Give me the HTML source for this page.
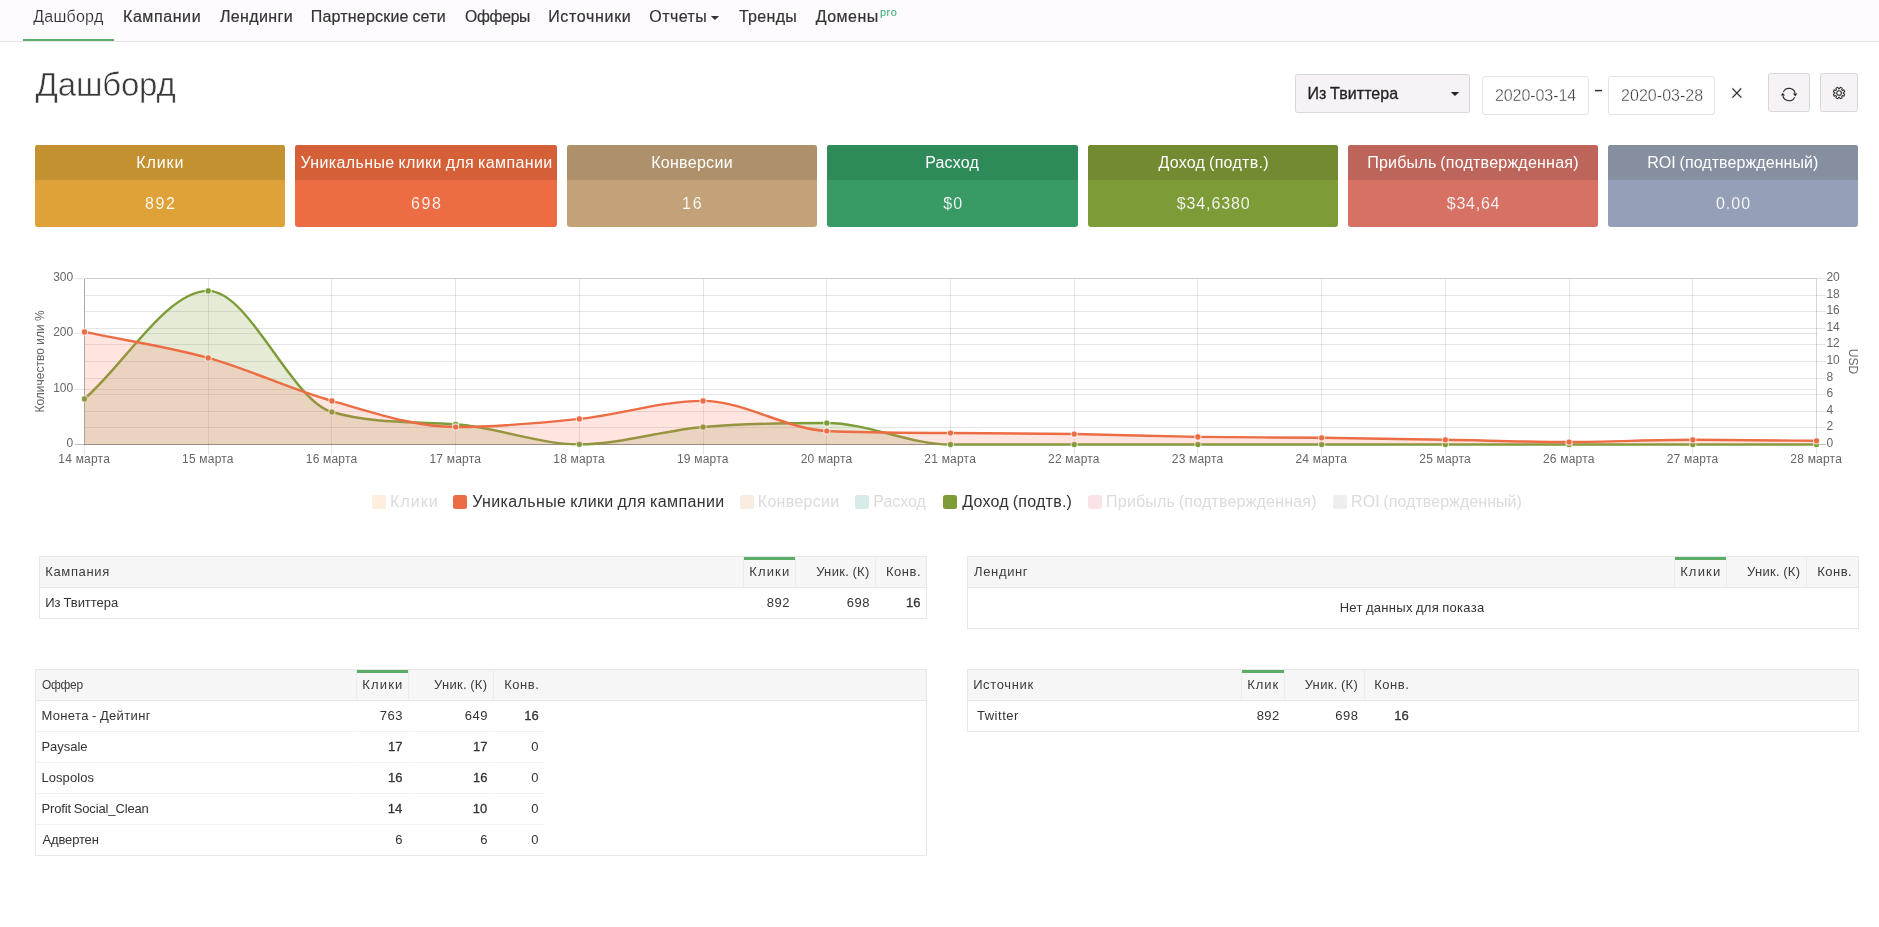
<!DOCTYPE html>
<html lang="ru"><head><meta charset="utf-8"><title>Дашборд</title>
<style>
html,body{margin:0;padding:0;background:#fff;}
body{width:1879px;height:927px;position:relative;overflow:hidden;font-family:"Liberation Sans",sans-serif;color:#333;}
#page{position:absolute;left:0;top:0;width:1879px;height:927px;overflow:hidden;background:#fff;will-change:transform;transform:translateZ(0);}
.b{position:absolute;display:block;}
.t{position:absolute;display:block;line-height:1;white-space:nowrap;margin:0;padding:0;font-weight:normal;text-decoration:none;}
.nav{position:absolute;left:0;top:0;width:1879px;height:41px;background:#fefbfe;border-bottom:1px solid #e6e6e6;}
.thin{-webkit-text-stroke:.5px #fff;}
.navact{-webkit-text-stroke:.15px #fefbfe;color:#2e2e2e !important;}
.navi{-webkit-text-stroke:.2px #333;}
.thin2{-webkit-text-stroke:.35px #fff;}
.thinw{}
.med{-webkit-text-stroke:.3px #222;text-shadow:0 0 1.5px #fff;}
.ico{filter:drop-shadow(0 0 .8px #fff);}
.sb{-webkit-text-stroke:.3px #333;}
svg line{stroke-width:1;shape-rendering:crispEdges;}
</style></head>
<body>
<div id="page">
<div class="nav"></div>
<div class="b " style="left:23px;top:39px;width:91px;height:2px;background:#5bac67;"></div>
<a class="t navact" style="left:33.18px;top:9px;font-size:16px;letter-spacing:0.263px;color:#333;">Дашборд</a>
<a class="t navi" style="left:122.98px;top:9px;font-size:16px;letter-spacing:0.589px;color:#333;">Кампании</a>
<a class="t navi" style="left:219.88px;top:9px;font-size:16px;letter-spacing:0.397px;color:#333;">Лендинги</a>
<a class="t navi" style="left:310.72px;top:9px;font-size:16px;letter-spacing:0.196px;word-spacing:-0.88px;color:#333;">Партнерские сети</a>
<a class="t navi" style="left:464.74px;top:9px;font-size:16px;letter-spacing:-0.300px;color:#333;transform:scaleX(0.9815);transform-origin:0.76px 50%;">Офферы</a>
<a class="t navi" style="left:548.18px;top:9px;font-size:16px;letter-spacing:0.670px;color:#333;">Источники</a>
<a class="t navi" style="left:649.24px;top:9px;font-size:16px;letter-spacing:0.452px;color:#333;">Отчеты</a>
<a class="t navi" style="left:738.94px;top:9px;font-size:16px;letter-spacing:0.304px;color:#333;">Тренды</a>
<a class="t navi" style="left:815.68px;top:9px;font-size:16px;letter-spacing:0.496px;color:#333;">Домены</a>
<svg class="b" style="left:710px;top:15px" width="11" height="7" viewBox="710 15 11 7"><path d="M710.8,16H719.1L714.95,20.1Z" fill="#333"/></svg>
<span class="t " style="left:879.88px;top:7px;font-size:11px;letter-spacing:0.580px;color:#34a86e;">pro</span>
<h1 class="t thin" style="left:35.55px;top:68px;font-size:33px;letter-spacing:-0.183px;color:#3a3a3a;">Дашборд</h1>
<div class="b " style="left:1295px;top:74px;width:175px;height:39px;background:#f6f2f6;border:1px solid #d9d6d9;border-radius:2.5px;box-sizing:border-box;"></div>
<span class="t med" style="left:1307.48px;top:86px;font-size:16px;letter-spacing:0.060px;word-spacing:-0.88px;color:#222;">Из Твиттера</span>
<svg class="b" style="left:1450px;top:91px" width="11" height="7" viewBox="1450 91 11 7"><path d="M1450.8,92H1459.2L1455,96.1Z" fill="#222"/></svg>
<div class="b " style="left:1482px;top:76px;width:107px;height:39px;background:#fff;border:1px solid #e4e3e4;border-radius:3px;box-sizing:border-box;"></div>
<span class="t thin2" style="left:1494.90px;top:88px;font-size:16px;letter-spacing:-0.056px;color:#3d3d3d;">2020-03-14</span>
<span class="t " style="left:1594.57px;top:83px;font-size:14.4px;color:#2f302d;font-weight:bold;transform:translateY(.45px);">–</span>
<div class="b " style="left:1608px;top:76px;width:107px;height:39px;background:#fff;border:1px solid #e4e3e4;border-radius:3px;box-sizing:border-box;"></div>
<span class="t thin2" style="left:1621.10px;top:88px;font-size:16px;letter-spacing:0.027px;color:#3d3d3d;">2020-03-28</span>
<span class="t thin2" style="left:1730.06px;top:82px;font-size:23.4px;color:#2f302d;">×</span>
<div class="b " style="left:1768px;top:73px;width:42px;height:39px;background:#f6f2f6;border:1px solid #d9d6d9;border-radius:2.5px;box-sizing:border-box;"></div>
<div class="b " style="left:1820px;top:73px;width:38px;height:39px;background:#f6f2f6;border:1px solid #d9d6d9;border-radius:2.5px;box-sizing:border-box;"></div>
<svg class="b ico" style="left:1777px;top:83px" width="24" height="24" viewBox="1777 83 24 24"><g fill="none" stroke="#2f302d" stroke-width="1.15"><path d="M1783.38,91.93A6.20,6.20 0 0 1 1795.14,93.69"/><path d="M1794.62,97.17A6.20,6.20 0 0 1 1782.86,95.41"/></g><path d="M1792.9,93.5H1797.3L1795.3,96.4Z" fill="#2f302d"/><path d="M1780.7,95.6H1785.1L1782.7,92.7Z" fill="#2f302d"/></svg>
<svg class="b ico" style="left:1827px;top:81px" width="24" height="24" viewBox="1827 81 24 24" fill="none" stroke="#2f302d" stroke-width="1.05"><path d="M1844.78,94.17L1843.93,96.23L1842.36,95.59L1841.64,96.31L1842.28,97.88L1840.22,98.73L1839.56,97.17L1838.54,97.17L1837.88,98.73L1835.82,97.88L1836.46,96.31L1835.74,95.59L1834.17,96.23L1833.32,94.17L1834.88,93.51L1834.88,92.49L1833.32,91.83L1834.17,89.77L1835.74,90.41L1836.46,89.69L1835.82,88.12L1837.88,87.27L1838.54,88.83L1839.56,88.83L1840.22,87.27L1842.28,88.12L1841.64,89.69L1842.36,90.41L1843.93,89.77L1844.78,91.83L1843.22,92.49L1843.22,93.51Z" stroke-linejoin="round"/><circle cx="1839.05" cy="93.00" r="2.3"/></svg>
<div class="b " style="left:35px;top:145px;width:250px;height:82px;background:#dfa239;border-radius:3px;overflow:hidden;"><div style="height:35px;background:#c49130"></div></div>
<div class="b " style="left:295px;top:145px;width:262px;height:82px;background:#ec6c44;border-radius:3px;overflow:hidden;"><div style="height:35px;background:#d56038"></div></div>
<div class="b " style="left:567px;top:145px;width:250px;height:82px;background:#c4a279;border-radius:3px;overflow:hidden;"><div style="height:35px;background:#ae916a"></div></div>
<div class="b " style="left:827px;top:145px;width:251px;height:82px;background:#389b65;border-radius:3px;overflow:hidden;"><div style="height:35px;background:#2f8a5a"></div></div>
<div class="b " style="left:1088px;top:145px;width:250px;height:82px;background:#7d9c38;border-radius:3px;overflow:hidden;"><div style="height:35px;background:#728a30"></div></div>
<div class="b " style="left:1348px;top:145px;width:250px;height:82px;background:#d67164;border-radius:3px;overflow:hidden;"><div style="height:35px;background:#bd655a"></div></div>
<div class="b " style="left:1608px;top:145px;width:250px;height:82px;background:#959fb8;border-radius:3px;overflow:hidden;"><div style="height:35px;background:#868fa0"></div></div>
<span class="t " style="left:136.28px;top:155px;font-size:16px;letter-spacing:0.920px;color:#fff;">Клики</span>
<span class="t " style="left:145.07px;top:196px;font-size:16px;letter-spacing:1.630px;color:#fff;-webkit-text-stroke:.15px #dfa239;">892</span>
<span class="t " style="left:300.41px;top:155px;font-size:16px;letter-spacing:0.375px;word-spacing:-0.88px;color:#fff;">Уникальные клики для кампании</span>
<span class="t " style="left:410.95px;top:196px;font-size:16px;letter-spacing:1.650px;color:#fff;-webkit-text-stroke:.15px #ec6c44;">698</span>
<span class="t " style="left:651.18px;top:155px;font-size:16px;letter-spacing:0.295px;color:#fff;">Конверсии</span>
<span class="t " style="left:681.90px;top:196px;font-size:16px;letter-spacing:1.920px;color:#fff;-webkit-text-stroke:.15px #c4a279;">16</span>
<span class="t " style="left:925.18px;top:155px;font-size:16px;letter-spacing:0.168px;color:#fff;">Расход</span>
<span class="t " style="left:943.34px;top:196px;font-size:16px;letter-spacing:1.000px;color:#fff;-webkit-text-stroke:.15px #389b65;">$0</span>
<span class="t " style="left:1158.38px;top:155px;font-size:16px;letter-spacing:0.277px;word-spacing:-0.88px;color:#fff;">Доход (подтв.)</span>
<span class="t " style="left:1176.84px;top:196px;font-size:16px;letter-spacing:0.863px;color:#fff;-webkit-text-stroke:.15px #7d9c38;">$34,6380</span>
<span class="t " style="left:1367.22px;top:155px;font-size:16px;letter-spacing:0.226px;word-spacing:-0.88px;color:#fff;">Прибыль (подтвержденная)</span>
<span class="t " style="left:1446.84px;top:196px;font-size:16px;letter-spacing:0.736px;color:#fff;-webkit-text-stroke:.15px #d67164;">$34,64</span>
<span class="t " style="left:1647.18px;top:155px;font-size:16px;letter-spacing:0.082px;word-spacing:-0.88px;color:#fff;">ROI (подтвержденный)</span>
<span class="t " style="left:1715.90px;top:196px;font-size:16px;letter-spacing:1.027px;color:#fff;-webkit-text-stroke:.15px #959fb8;">0.00</span>
<svg class="b" style="left:0;top:250px" width="1879" height="240" viewBox="0 250 1879 240">
<line x1="84.5" y1="427.5" x2="1825.5" y2="427.5" stroke="#000" stroke-opacity=".1"/>
<line x1="84.5" y1="411.5" x2="1825.5" y2="411.5" stroke="#000" stroke-opacity=".1"/>
<line x1="84.5" y1="394.5" x2="1825.5" y2="394.5" stroke="#000" stroke-opacity=".1"/>
<line x1="84.5" y1="378.5" x2="1825.5" y2="378.5" stroke="#000" stroke-opacity=".1"/>
<line x1="84.5" y1="361.5" x2="1825.5" y2="361.5" stroke="#000" stroke-opacity=".1"/>
<line x1="84.5" y1="344.5" x2="1825.5" y2="344.5" stroke="#000" stroke-opacity=".1"/>
<line x1="84.5" y1="328.5" x2="1825.5" y2="328.5" stroke="#000" stroke-opacity=".1"/>
<line x1="84.5" y1="311.5" x2="1825.5" y2="311.5" stroke="#000" stroke-opacity=".1"/>
<line x1="84.5" y1="295.5" x2="1825.5" y2="295.5" stroke="#000" stroke-opacity=".1"/>
<line x1="84.5" y1="278.5" x2="1825.5" y2="278.5" stroke="#000" stroke-opacity=".1"/>
<line x1="74.5" y1="389.5" x2="1816.5" y2="389.5" stroke="#000" stroke-opacity=".1"/>
<line x1="74.5" y1="333.5" x2="1816.5" y2="333.5" stroke="#000" stroke-opacity=".1"/>
<line x1="74.5" y1="278.5" x2="1816.5" y2="278.5" stroke="#000" stroke-opacity=".1"/>
<line x1="84.5" y1="278.5" x2="84.5" y2="454.5" stroke="#000" stroke-opacity=".1"/>
<line x1="208.5" y1="278.5" x2="208.5" y2="454.5" stroke="#000" stroke-opacity=".1"/>
<line x1="331.5" y1="278.5" x2="331.5" y2="454.5" stroke="#000" stroke-opacity=".1"/>
<line x1="455.5" y1="278.5" x2="455.5" y2="454.5" stroke="#000" stroke-opacity=".1"/>
<line x1="579.5" y1="278.5" x2="579.5" y2="454.5" stroke="#000" stroke-opacity=".1"/>
<line x1="703.5" y1="278.5" x2="703.5" y2="454.5" stroke="#000" stroke-opacity=".1"/>
<line x1="826.5" y1="278.5" x2="826.5" y2="454.5" stroke="#000" stroke-opacity=".1"/>
<line x1="950.5" y1="278.5" x2="950.5" y2="454.5" stroke="#000" stroke-opacity=".1"/>
<line x1="1074.5" y1="278.5" x2="1074.5" y2="454.5" stroke="#000" stroke-opacity=".1"/>
<line x1="1197.5" y1="278.5" x2="1197.5" y2="454.5" stroke="#000" stroke-opacity=".1"/>
<line x1="1321.5" y1="278.5" x2="1321.5" y2="454.5" stroke="#000" stroke-opacity=".1"/>
<line x1="1445.5" y1="278.5" x2="1445.5" y2="454.5" stroke="#000" stroke-opacity=".1"/>
<line x1="1569.5" y1="278.5" x2="1569.5" y2="454.5" stroke="#000" stroke-opacity=".1"/>
<line x1="1692.5" y1="278.5" x2="1692.5" y2="454.5" stroke="#000" stroke-opacity=".1"/>
<line x1="1816.5" y1="278.5" x2="1816.5" y2="454.5" stroke="#000" stroke-opacity=".1"/>
<line x1="1816.5" y1="278.5" x2="1816.5" y2="444.5" stroke="#000" stroke-opacity=".06"/>
<line x1="84.5" y1="278.5" x2="84.5" y2="444.5" stroke="#000" stroke-opacity=".25"/>
<line x1="74.5" y1="444.5" x2="1816.5" y2="444.5" stroke="#000" stroke-opacity=".25"/>
<line x1="84.5" y1="444.5" x2="1825.5" y2="444.5" stroke="#000" stroke-opacity=".25"/>
<path d="M84.50,398.90 C125.74,362.90 166.98,290.90 208.21,290.90 C249.45,290.90 290.69,400.05 331.93,412.00 C373.17,423.95 414.40,421.41 455.64,424.30 C496.88,427.19 538.12,444.30 579.36,444.30 C620.60,444.30 661.83,430.55 703.07,427.00 C744.31,423.45 785.55,423.00 826.79,423.00 C868.02,423.00 909.26,444.50 950.50,444.50 C991.74,444.50 1032.98,444.50 1074.21,444.50 C1115.45,444.50 1156.69,444.50 1197.93,444.50 C1239.17,444.50 1280.40,444.50 1321.64,444.50 C1362.88,444.50 1404.12,444.50 1445.36,444.50 C1486.60,444.50 1527.83,444.50 1569.07,444.50 C1610.31,444.50 1651.55,444.50 1692.79,444.50 C1734.02,444.50 1775.26,444.50 1816.50,444.50 L1816.50,444.50 L84.50,444.50 Z" fill="#7d9c38" fill-opacity="0.2"/>
<path d="M84.50,398.90 C125.74,362.90 166.98,290.90 208.21,290.90 C249.45,290.90 290.69,400.05 331.93,412.00 C373.17,423.95 414.40,421.41 455.64,424.30 C496.88,427.19 538.12,444.30 579.36,444.30 C620.60,444.30 661.83,430.55 703.07,427.00 C744.31,423.45 785.55,423.00 826.79,423.00 C868.02,423.00 909.26,444.50 950.50,444.50 C991.74,444.50 1032.98,444.50 1074.21,444.50 C1115.45,444.50 1156.69,444.50 1197.93,444.50 C1239.17,444.50 1280.40,444.50 1321.64,444.50 C1362.88,444.50 1404.12,444.50 1445.36,444.50 C1486.60,444.50 1527.83,444.50 1569.07,444.50 C1610.31,444.50 1651.55,444.50 1692.79,444.50 C1734.02,444.50 1775.26,444.50 1816.50,444.50" fill="none" stroke="#7d9c38" stroke-width="2.4" stroke-linejoin="round"/>
<circle cx="84.50" cy="398.90" r="3.1" fill="#7d9c38" stroke="#fff" stroke-opacity=".7" stroke-width="1.1"/>
<circle cx="208.21" cy="290.90" r="3.1" fill="#7d9c38" stroke="#fff" stroke-opacity=".7" stroke-width="1.1"/>
<circle cx="331.93" cy="412.00" r="3.1" fill="#7d9c38" stroke="#fff" stroke-opacity=".7" stroke-width="1.1"/>
<circle cx="455.64" cy="424.30" r="3.1" fill="#7d9c38" stroke="#fff" stroke-opacity=".7" stroke-width="1.1"/>
<circle cx="579.36" cy="444.30" r="3.1" fill="#7d9c38" stroke="#fff" stroke-opacity=".7" stroke-width="1.1"/>
<circle cx="703.07" cy="427.00" r="3.1" fill="#7d9c38" stroke="#fff" stroke-opacity=".7" stroke-width="1.1"/>
<circle cx="826.79" cy="423.00" r="3.1" fill="#7d9c38" stroke="#fff" stroke-opacity=".7" stroke-width="1.1"/>
<circle cx="950.50" cy="444.50" r="3.1" fill="#7d9c38" stroke="#fff" stroke-opacity=".7" stroke-width="1.1"/>
<circle cx="1074.21" cy="444.50" r="3.1" fill="#7d9c38" stroke="#fff" stroke-opacity=".7" stroke-width="1.1"/>
<circle cx="1197.93" cy="444.50" r="3.1" fill="#7d9c38" stroke="#fff" stroke-opacity=".7" stroke-width="1.1"/>
<circle cx="1321.64" cy="444.50" r="3.1" fill="#7d9c38" stroke="#fff" stroke-opacity=".7" stroke-width="1.1"/>
<circle cx="1445.36" cy="444.50" r="3.1" fill="#7d9c38" stroke="#fff" stroke-opacity=".7" stroke-width="1.1"/>
<circle cx="1569.07" cy="444.50" r="3.1" fill="#7d9c38" stroke="#fff" stroke-opacity=".7" stroke-width="1.1"/>
<circle cx="1692.79" cy="444.50" r="3.1" fill="#7d9c38" stroke="#fff" stroke-opacity=".7" stroke-width="1.1"/>
<circle cx="1816.50" cy="444.50" r="3.1" fill="#7d9c38" stroke="#fff" stroke-opacity=".7" stroke-width="1.1"/>
<path d="M84.50,331.90 C125.74,340.57 166.98,346.40 208.21,357.90 C249.45,369.40 290.69,389.38 331.93,400.90 C373.17,412.42 414.40,427.00 455.64,427.00 C496.88,427.00 538.12,423.25 579.36,418.90 C620.60,414.55 661.83,400.90 703.07,400.90 C744.31,400.90 785.55,429.01 826.79,431.00 C868.02,432.99 909.26,432.81 950.50,433.00 C991.74,433.19 1032.98,433.35 1074.21,434.00 C1115.45,434.65 1156.69,436.27 1197.93,436.90 C1239.17,437.53 1280.40,437.32 1321.64,437.80 C1362.88,438.28 1404.12,439.10 1445.36,439.80 C1486.60,440.50 1527.83,442.00 1569.07,442.00 C1610.31,442.00 1651.55,439.80 1692.79,439.80 C1734.02,439.80 1775.26,440.47 1816.50,440.80 L1816.50,444.50 L84.50,444.50 Z" fill="#ff7864" fill-opacity="0.2"/>
<path d="M84.50,331.90 C125.74,340.57 166.98,346.40 208.21,357.90 C249.45,369.40 290.69,389.38 331.93,400.90 C373.17,412.42 414.40,427.00 455.64,427.00 C496.88,427.00 538.12,423.25 579.36,418.90 C620.60,414.55 661.83,400.90 703.07,400.90 C744.31,400.90 785.55,429.01 826.79,431.00 C868.02,432.99 909.26,432.81 950.50,433.00 C991.74,433.19 1032.98,433.35 1074.21,434.00 C1115.45,434.65 1156.69,436.27 1197.93,436.90 C1239.17,437.53 1280.40,437.32 1321.64,437.80 C1362.88,438.28 1404.12,439.10 1445.36,439.80 C1486.60,440.50 1527.83,442.00 1569.07,442.00 C1610.31,442.00 1651.55,439.80 1692.79,439.80 C1734.02,439.80 1775.26,440.47 1816.50,440.80" fill="none" stroke="#ec6c44" stroke-width="2.4" stroke-linejoin="round"/>
<circle cx="84.50" cy="331.90" r="3.1" fill="#ec6c44" stroke="#fff" stroke-opacity=".7" stroke-width="1.1"/>
<circle cx="208.21" cy="357.90" r="3.1" fill="#ec6c44" stroke="#fff" stroke-opacity=".7" stroke-width="1.1"/>
<circle cx="331.93" cy="400.90" r="3.1" fill="#ec6c44" stroke="#fff" stroke-opacity=".7" stroke-width="1.1"/>
<circle cx="455.64" cy="427.00" r="3.1" fill="#ec6c44" stroke="#fff" stroke-opacity=".7" stroke-width="1.1"/>
<circle cx="579.36" cy="418.90" r="3.1" fill="#ec6c44" stroke="#fff" stroke-opacity=".7" stroke-width="1.1"/>
<circle cx="703.07" cy="400.90" r="3.1" fill="#ec6c44" stroke="#fff" stroke-opacity=".7" stroke-width="1.1"/>
<circle cx="826.79" cy="431.00" r="3.1" fill="#ec6c44" stroke="#fff" stroke-opacity=".7" stroke-width="1.1"/>
<circle cx="950.50" cy="433.00" r="3.1" fill="#ec6c44" stroke="#fff" stroke-opacity=".7" stroke-width="1.1"/>
<circle cx="1074.21" cy="434.00" r="3.1" fill="#ec6c44" stroke="#fff" stroke-opacity=".7" stroke-width="1.1"/>
<circle cx="1197.93" cy="436.90" r="3.1" fill="#ec6c44" stroke="#fff" stroke-opacity=".7" stroke-width="1.1"/>
<circle cx="1321.64" cy="437.80" r="3.1" fill="#ec6c44" stroke="#fff" stroke-opacity=".7" stroke-width="1.1"/>
<circle cx="1445.36" cy="439.80" r="3.1" fill="#ec6c44" stroke="#fff" stroke-opacity=".7" stroke-width="1.1"/>
<circle cx="1569.07" cy="442.00" r="3.1" fill="#ec6c44" stroke="#fff" stroke-opacity=".7" stroke-width="1.1"/>
<circle cx="1692.79" cy="439.80" r="3.1" fill="#ec6c44" stroke="#fff" stroke-opacity=".7" stroke-width="1.1"/>
<circle cx="1816.50" cy="440.80" r="3.1" fill="#ec6c44" stroke="#fff" stroke-opacity=".7" stroke-width="1.1"/>
<g font-family="'Liberation Sans', sans-serif" font-size="12" fill="#666">
<text x="73.2" y="447.0" text-anchor="end">0</text>
<text x="73.2" y="391.7" text-anchor="end">100</text>
<text x="73.2" y="336.3" text-anchor="end">200</text>
<text x="73.2" y="281.0" text-anchor="end">300</text>
<text x="1826.4" y="447.0">0</text>
<text x="1826.4" y="430.4">2</text>
<text x="1826.4" y="413.8">4</text>
<text x="1826.4" y="397.2">6</text>
<text x="1826.4" y="380.6">8</text>
<text x="1826.4" y="364.0">10</text>
<text x="1826.4" y="347.4">12</text>
<text x="1826.4" y="330.8">14</text>
<text x="1826.4" y="314.2">16</text>
<text x="1826.4" y="297.6">18</text>
<text x="1826.4" y="281.0">20</text>
<text x="84.2" y="463.2" text-anchor="middle" letter-spacing=".2">14 марта</text>
<text x="207.9" y="463.2" text-anchor="middle" letter-spacing=".2">15 марта</text>
<text x="331.6" y="463.2" text-anchor="middle" letter-spacing=".2">16 марта</text>
<text x="455.3" y="463.2" text-anchor="middle" letter-spacing=".2">17 марта</text>
<text x="579.1" y="463.2" text-anchor="middle" letter-spacing=".2">18 марта</text>
<text x="702.8" y="463.2" text-anchor="middle" letter-spacing=".2">19 марта</text>
<text x="826.5" y="463.2" text-anchor="middle" letter-spacing=".2">20 марта</text>
<text x="950.2" y="463.2" text-anchor="middle" letter-spacing=".2">21 марта</text>
<text x="1073.9" y="463.2" text-anchor="middle" letter-spacing=".2">22 марта</text>
<text x="1197.6" y="463.2" text-anchor="middle" letter-spacing=".2">23 марта</text>
<text x="1321.3" y="463.2" text-anchor="middle" letter-spacing=".2">24 марта</text>
<text x="1445.1" y="463.2" text-anchor="middle" letter-spacing=".2">25 марта</text>
<text x="1568.8" y="463.2" text-anchor="middle" letter-spacing=".2">26 марта</text>
<text x="1692.5" y="463.2" text-anchor="middle" letter-spacing=".2">27 марта</text>
<text x="1816.2" y="463.2" text-anchor="middle" letter-spacing=".2">28 марта</text>
<text transform="translate(44.0,361.5) rotate(-90)" text-anchor="middle">Количество или %</text>
<text transform="translate(1848.5,361.5) rotate(90)" text-anchor="middle">USD</text>
</g></svg>
<div class="b " style="left:372px;top:495px;width:14px;height:14px;background:#ffeede;border-radius:2.5px;"></div>
<span class="t " style="left:390.08px;top:494px;font-size:16px;letter-spacing:1.020px;color:#dddade;">Клики</span>
<div class="b " style="left:453px;top:495px;width:14px;height:14px;background:#ec6c44;border-radius:2.5px;"></div>
<span class="t " style="left:472.16px;top:494px;font-size:16px;letter-spacing:0.386px;word-spacing:-0.88px;color:#333;">Уникальные клики для кампании</span>
<div class="b " style="left:740px;top:495px;width:14px;height:14px;background:#f9ede3;border-radius:2.5px;"></div>
<span class="t " style="left:757.78px;top:494px;font-size:16px;letter-spacing:0.308px;color:#dddade;">Конверсии</span>
<div class="b " style="left:855px;top:495px;width:14px;height:14px;background:#d7ebe8;border-radius:2.5px;"></div>
<span class="t " style="left:873.28px;top:494px;font-size:16px;letter-spacing:-0.012px;color:#dddade;">Расход</span>
<div class="b " style="left:943px;top:495px;width:14px;height:14px;background:#7d9c38;border-radius:2.5px;"></div>
<span class="t " style="left:962.28px;top:494px;font-size:16px;letter-spacing:0.246px;word-spacing:-0.88px;color:#333;">Доход (подтв.)</span>
<div class="b " style="left:1088px;top:495px;width:14px;height:14px;background:#fae3e6;border-radius:2.5px;"></div>
<span class="t " style="left:1106.12px;top:494px;font-size:16px;letter-spacing:0.187px;word-spacing:-0.88px;color:#dddade;">Прибыль (подтвержденная)</span>
<div class="b " style="left:1333px;top:495px;width:14px;height:14px;background:#eeeeee;border-radius:2.5px;"></div>
<span class="t " style="left:1351.08px;top:494px;font-size:16px;letter-spacing:0.061px;word-spacing:-0.88px;color:#dddade;">ROI (подтвержденный)</span>
<div class="b " style="left:39px;top:556px;width:888px;height:63px;border:1px solid #e7e7e7;box-sizing:border-box;background:#fff;"></div>
<div class="b " style="left:40px;top:557px;width:886px;height:30px;background:#f6f6f6;"></div>
<div class="b " style="left:39px;top:587px;width:888px;height:1px;background:#e7e7e7;"></div>
<div class="b " style="left:743px;top:557px;width:1px;height:30px;background:#ebebeb;"></div>
<div class="b " style="left:744px;top:557px;width:51px;height:3px;background:#5bac67;"></div>
<div class="b " style="left:795px;top:557px;width:1px;height:30px;background:#ebebeb;"></div>
<div class="b " style="left:875px;top:557px;width:1px;height:30px;background:#ebebeb;"></div>
<span class="t " style="left:45.23px;top:565px;font-size:13px;letter-spacing:0.639px;color:#3c3c3c;">Кампания</span>
<span class="t " style="left:749.23px;top:565px;font-size:13px;letter-spacing:1.147px;color:#3c3c3c;">Клики</span>
<span class="t " style="left:816.14px;top:565px;font-size:13px;letter-spacing:0.325px;word-spacing:-0.71px;color:#3c3c3c;">Уник. (К)</span>
<span class="t " style="left:885.93px;top:565px;font-size:13px;letter-spacing:0.561px;color:#3c3c3c;">Конв.</span>
<span class="t " style="left:45.23px;top:596px;font-size:13px;letter-spacing:-0.015px;word-spacing:-0.71px;color:#333;">Из Твиттера</span>
<span class="t " style="left:766.75px;top:596px;font-size:13px;letter-spacing:0.496px;color:#333;">892</span>
<span class="t " style="left:846.85px;top:596px;font-size:13px;letter-spacing:0.512px;color:#333;">698</span>
<span class="t sb" style="left:906.12px;top:596px;font-size:13px;color:#333;">16</span>
<div class="b " style="left:967px;top:556px;width:892px;height:73px;border:1px solid #e7e7e7;box-sizing:border-box;background:#fff;"></div>
<div class="b " style="left:968px;top:557px;width:890px;height:30px;background:#f6f6f6;"></div>
<div class="b " style="left:967px;top:587px;width:892px;height:1px;background:#e7e7e7;"></div>
<div class="b " style="left:1674px;top:557px;width:1px;height:30px;background:#ebebeb;"></div>
<div class="b " style="left:1675px;top:557px;width:51px;height:3px;background:#5bac67;"></div>
<div class="b " style="left:1726px;top:557px;width:1px;height:30px;background:#ebebeb;"></div>
<div class="b " style="left:1806px;top:557px;width:1px;height:30px;background:#ebebeb;"></div>
<span class="t " style="left:974.10px;top:565px;font-size:13px;letter-spacing:0.627px;color:#3c3c3c;">Лендинг</span>
<span class="t " style="left:1680.13px;top:565px;font-size:13px;letter-spacing:1.172px;color:#3c3c3c;">Клики</span>
<span class="t " style="left:1746.94px;top:565px;font-size:13px;letter-spacing:0.325px;word-spacing:-0.71px;color:#3c3c3c;">Уник. (К)</span>
<span class="t " style="left:1817.23px;top:565px;font-size:13px;letter-spacing:0.486px;color:#3c3c3c;">Конв.</span>
<span class="t " style="left:1339.68px;top:601px;font-size:13px;letter-spacing:0.298px;word-spacing:-0.71px;color:#333;">Нет данных для показа</span>
<div class="b " style="left:35px;top:669px;width:892px;height:187px;border:1px solid #e7e7e7;box-sizing:border-box;background:#fff;"></div>
<div class="b " style="left:36px;top:670px;width:890px;height:30px;background:#f6f6f6;"></div>
<div class="b " style="left:35px;top:700px;width:892px;height:1px;background:#e7e7e7;"></div>
<div class="b " style="left:356px;top:670px;width:1px;height:30px;background:#ebebeb;"></div>
<div class="b " style="left:357px;top:670px;width:51px;height:3px;background:#5bac67;"></div>
<div class="b " style="left:408px;top:670px;width:1px;height:30px;background:#ebebeb;"></div>
<div class="b " style="left:493px;top:670px;width:1px;height:30px;background:#ebebeb;"></div>
<span class="t " style="left:41.88px;top:678px;font-size:13px;letter-spacing:-0.300px;color:#3c3c3c;transform:scaleX(0.9171);transform-origin:0.62px 50%;">Оффер</span>
<span class="t " style="left:362.33px;top:678px;font-size:13px;letter-spacing:1.147px;color:#3c3c3c;">Клики</span>
<span class="t " style="left:433.94px;top:678px;font-size:13px;letter-spacing:0.325px;word-spacing:-0.71px;color:#3c3c3c;">Уник. (К)</span>
<span class="t " style="left:504.13px;top:678px;font-size:13px;letter-spacing:0.536px;color:#3c3c3c;">Конв.</span>
<span class="t " style="left:41.43px;top:709px;font-size:13px;letter-spacing:0.346px;word-spacing:-0.71px;color:#333;">Монета - Дейтинг</span>
<span class="t " style="left:379.75px;top:709px;font-size:13px;letter-spacing:0.512px;color:#333;">763</span>
<span class="t " style="left:464.65px;top:709px;font-size:13px;letter-spacing:0.529px;color:#333;">649</span>
<span class="t sb" style="left:524.22px;top:709px;font-size:13px;color:#333;">16</span>
<div class="b " style="left:36px;top:731px;width:320px;height:1px;background:#f2f2f2;"></div>
<div class="b " style="left:357px;top:731px;width:51px;height:1px;background:#f2f2f2;"></div>
<div class="b " style="left:409px;top:731px;width:84px;height:1px;background:#f2f2f2;"></div>
<div class="b " style="left:494px;top:731px;width:50px;height:1px;background:#f2f2f2;"></div>
<span class="t " style="left:41.43px;top:740px;font-size:13px;letter-spacing:-0.020px;color:#333;">Paysale</span>
<span class="t sb" style="left:388.09px;top:740px;font-size:13px;color:#333;">17</span>
<span class="t sb" style="left:472.99px;top:740px;font-size:13px;color:#333;">17</span>
<span class="t " style="left:531.37px;top:740px;font-size:13px;color:#333;">0</span>
<div class="b " style="left:36px;top:762px;width:320px;height:1px;background:#f2f2f2;"></div>
<div class="b " style="left:357px;top:762px;width:51px;height:1px;background:#f2f2f2;"></div>
<div class="b " style="left:409px;top:762px;width:84px;height:1px;background:#f2f2f2;"></div>
<div class="b " style="left:494px;top:762px;width:50px;height:1px;background:#f2f2f2;"></div>
<span class="t " style="left:41.43px;top:771px;font-size:13px;letter-spacing:0.071px;color:#333;">Lospolos</span>
<span class="t sb" style="left:388.02px;top:771px;font-size:13px;color:#333;">16</span>
<span class="t sb" style="left:472.92px;top:771px;font-size:13px;color:#333;">16</span>
<span class="t " style="left:531.37px;top:771px;font-size:13px;color:#333;">0</span>
<div class="b " style="left:36px;top:793px;width:320px;height:1px;background:#f2f2f2;"></div>
<div class="b " style="left:357px;top:793px;width:51px;height:1px;background:#f2f2f2;"></div>
<div class="b " style="left:409px;top:793px;width:84px;height:1px;background:#f2f2f2;"></div>
<div class="b " style="left:494px;top:793px;width:50px;height:1px;background:#f2f2f2;"></div>
<span class="t " style="left:41.43px;top:802px;font-size:13px;letter-spacing:-0.135px;word-spacing:-0.71px;color:#333;">Profit Social_Clean</span>
<span class="t sb" style="left:387.83px;top:802px;font-size:13px;color:#333;">14</span>
<span class="t sb" style="left:472.86px;top:802px;font-size:13px;color:#333;">10</span>
<span class="t " style="left:531.37px;top:802px;font-size:13px;color:#333;">0</span>
<div class="b " style="left:36px;top:824px;width:320px;height:1px;background:#f2f2f2;"></div>
<div class="b " style="left:357px;top:824px;width:51px;height:1px;background:#f2f2f2;"></div>
<div class="b " style="left:409px;top:824px;width:84px;height:1px;background:#f2f2f2;"></div>
<div class="b " style="left:494px;top:824px;width:50px;height:1px;background:#f2f2f2;"></div>
<span class="t " style="left:42.47px;top:833px;font-size:13px;letter-spacing:-0.141px;color:#333;">Адвертен</span>
<span class="t " style="left:395.24px;top:833px;font-size:13px;color:#333;">6</span>
<span class="t " style="left:480.14px;top:833px;font-size:13px;color:#333;">6</span>
<span class="t " style="left:531.37px;top:833px;font-size:13px;color:#333;">0</span>
<div class="b " style="left:967px;top:669px;width:892px;height:63px;border:1px solid #e7e7e7;box-sizing:border-box;background:#fff;"></div>
<div class="b " style="left:968px;top:670px;width:890px;height:30px;background:#f6f6f6;"></div>
<div class="b " style="left:967px;top:700px;width:892px;height:1px;background:#e7e7e7;"></div>
<div class="b " style="left:1241px;top:670px;width:1px;height:30px;background:#ebebeb;"></div>
<div class="b " style="left:1242px;top:670px;width:42px;height:3px;background:#5bac67;"></div>
<div class="b " style="left:1284px;top:670px;width:1px;height:30px;background:#ebebeb;"></div>
<div class="b " style="left:1364px;top:670px;width:1px;height:30px;background:#ebebeb;"></div>
<span class="t " style="left:973.13px;top:678px;font-size:13px;letter-spacing:0.642px;color:#3c3c3c;">Источник</span>
<span class="t " style="left:1247.23px;top:678px;font-size:13px;letter-spacing:0.932px;color:#3c3c3c;">Клик</span>
<span class="t " style="left:1304.64px;top:678px;font-size:13px;letter-spacing:0.325px;word-spacing:-0.71px;color:#3c3c3c;">Уник. (К)</span>
<span class="t " style="left:1374.13px;top:678px;font-size:13px;letter-spacing:0.536px;color:#3c3c3c;">Конв.</span>
<span class="t " style="left:976.91px;top:709px;font-size:13px;letter-spacing:0.534px;color:#333;">Twitter</span>
<span class="t " style="left:1256.65px;top:709px;font-size:13px;letter-spacing:0.496px;color:#333;">892</span>
<span class="t " style="left:1335.35px;top:709px;font-size:13px;letter-spacing:0.512px;color:#333;">698</span>
<span class="t sb" style="left:1394.22px;top:709px;font-size:13px;color:#333;">16</span>
</div>
</body></html>
